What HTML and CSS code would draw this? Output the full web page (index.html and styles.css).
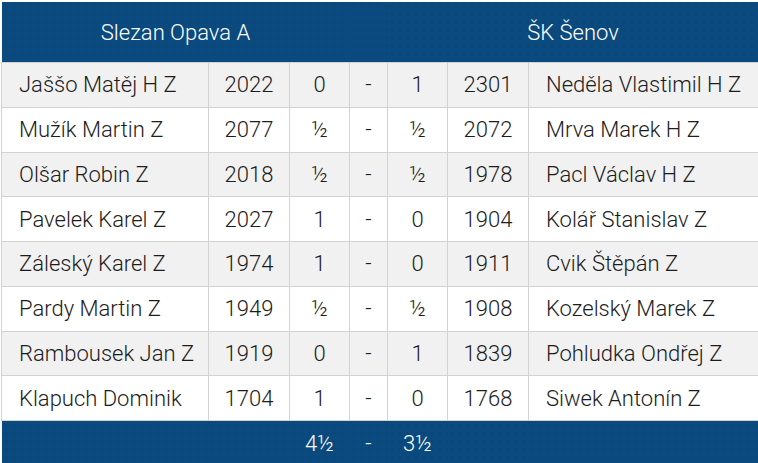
FILE: index.html
```html
<!DOCTYPE html>
<html lang="cs">
<head>
<meta charset="utf-8">
<title>Slezan Opava A – ŠK Šenov</title>
<link rel="stylesheet" href="styles.css">
</head>
<body>
<div class="wrap">
<table class="match">
  <colgroup>
    <col class="c-name"><col class="c-elo"><col class="c-res"><col class="c-dash"><col class="c-res"><col class="c-elo"><col class="c-name2">
  </colgroup>
  <thead>
    <tr class="head">
      <th colspan="3">Slezan Opava A</th>
      <th></th>
      <th colspan="3">ŠK Šenov</th>
    </tr>
  </thead>
  <tbody>
    <tr><td class="name">Jaššo Matěj H Z</td><td>2022</td><td>0</td><td>-</td><td>1</td><td>2301</td><td class="name">Neděla Vlastimil H Z</td></tr>
    <tr><td class="name">Mužík Martin Z</td><td>2077</td><td>½</td><td>-</td><td>½</td><td>2072</td><td class="name">Mrva Marek H Z</td></tr>
    <tr><td class="name">Olšar Robin Z</td><td>2018</td><td>½</td><td>-</td><td>½</td><td>1978</td><td class="name">Pacl Václav H Z</td></tr>
    <tr><td class="name">Pavelek Karel Z</td><td>2027</td><td>1</td><td>-</td><td>0</td><td>1904</td><td class="name">Kolář Stanislav Z</td></tr>
    <tr><td class="name">Záleský Karel Z</td><td>1974</td><td>1</td><td>-</td><td>0</td><td>1911</td><td class="name">Cvik Štěpán Z</td></tr>
    <tr><td class="name">Pardy Martin Z</td><td>1949</td><td>½</td><td>-</td><td>½</td><td>1908</td><td class="name">Kozelský Marek Z</td></tr>
    <tr><td class="name">Rambousek Jan Z</td><td>1919</td><td>0</td><td>-</td><td>1</td><td>1839</td><td class="name">Pohludka Ondřej Z</td></tr>
    <tr><td class="name">Klapuch Dominik</td><td>1704</td><td>1</td><td>-</td><td>0</td><td>1768</td><td class="name">Siwek Antonín Z</td></tr>
  </tbody>
  <tfoot>
    <tr class="foot">
      <td></td><td></td><td>4½</td><td>-</td><td>3½</td><td></td><td></td>
    </tr>
  </tfoot>
</table>
</div>
</body>
</html>
```
FILE: styles.css
```css
html, body {
  margin: 0;
  padding: 0;
  background: #ffffff;
}
.wrap {
  padding: 2px 0 0 1px;
}
.match {
  border-collapse: collapse;
  table-layout: fixed;
  width: 757px;
  font-family: Roboto, "Liberation Sans", sans-serif;
  font-weight: 300;
  font-size: 22px;
  color: #1c1c1c;
}
.c-name { width: 207px; }
.c-elo { width: 81px; }
.c-res { width: 60px; }
.c-dash { width: 38px; }
.c-name2 { width: 230px; }
.match td {
  border: 1px solid #d2d2d2;
  padding: 0;
  height: 43.75px;
  text-align: center;
  white-space: nowrap;
  overflow: hidden;
}
.match td.name {
  text-align: left;
  padding-left: 17px;
}
.match tbody tr:nth-child(odd) td {
  background: #f1f1f1;
}
.match tbody tr:nth-child(even) td {
  background: #ffffff;
}
.head th {
  background-color: #0b4a7e;
  background-image: radial-gradient(rgba(0, 0, 0, 0.1) 0.6px, transparent 0.9px);
  background-size: 8px 8px;
  color: #ffffff;
  font-weight: 300;
  height: 60px;
  padding: 0;
  text-align: center;
  border: none;
}
.foot td {
  background-color: #0b4a7e;
  background-image: radial-gradient(rgba(0, 0, 0, 0.1) 0.6px, transparent 0.9px);
  background-size: 8px 8px;
  color: #ffffff;
  border: none;
  height: 45px;
}
```
